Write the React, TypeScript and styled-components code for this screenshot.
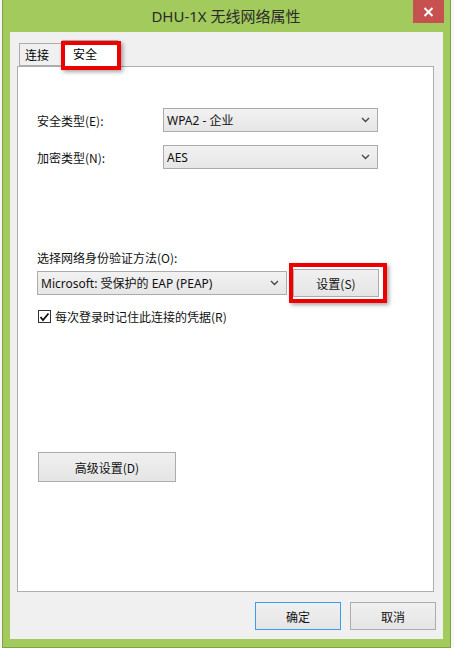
import React from "react";
import styled, { createGlobalStyle } from "styled-components";

const Global = createGlobalStyle`
  html, body { margin: 0; padding: 0; background: #f6f6f6; }
  body { font-family: "Noto Sans", "Noto Sans CJK SC", sans-serif; font-size: 12px; color: #000; }
  * { box-sizing: border-box; }
`;

const Page = styled.div`
  padding-left: 2px;
  width: 454px;
  height: 648px;
  overflow: hidden;
`;

const Window = styled.div`
  width: 449px;
  height: 648px;
  background: #a2ca5c;
  border: 1px solid #7ea446;
  border-top: none;
  display: flex;
  flex-direction: column;
`;

const TitleBar = styled.div`
  height: 32px;
  display: grid;
  grid-template-columns: 1fr auto 1fr;
  align-items: start;
`;

const Title = styled.div`
  grid-column: 2;
  font-family: "Noto Sans", "Noto Sans CJK SC", sans-serif;
  font-size: 15px;
  line-height: 32px;
  color: #2b2b2b;
  margin-right: 1px;
`;

const CloseButton = styled.div`
  grid-column: 3;
  justify-self: end;
  margin-right: 6px;
  width: 31px;
  height: 23px;
  background: #c75050;
  display: flex;
  align-items: center;
  justify-content: center;
`;

const Client = styled.div`
  margin: 0 7px 8px 7px;
  height: 607px;
  background: #f0f0f0;
  padding: 8px 9px 9px 7px;
  display: flex;
  flex-direction: column;
`;

const TabStrip = styled.div`
  height: 26px;
  display: flex;
  align-items: flex-end;
  padding-left: 2px;
  position: relative;
  z-index: 2;
`;

const Tab = styled.div<{ $active?: boolean; $w: number; $pl: number }>`
  width: ${(p) => p.$w}px;
  height: ${(p) => (p.$active ? 27 : 23)}px;
  margin-bottom: ${(p) => (p.$active ? -1 : 0)}px;
  padding-left: ${(p) => p.$pl}px;
  padding-top: ${(p) => (p.$active ? 4 : 2)}px;
  background: ${(p) => (p.$active ? "#ffffff" : "#f0f0f0")};
  border: 1px solid #adadad;
  border-bottom: ${(p) => (p.$active ? "none" : "1px solid #adadad")};
  border-left: ${(p) => (p.$active ? "none" : "1px solid #adadad")};
  font-family: "Noto Sans CJK SC", sans-serif;
  font-size: 12px;
  line-height: 17px;
  position: relative;
`;

const Annotation = styled.div<{ $l: number; $t: number; $r: number; $b: number }>`
  position: absolute;
  left: ${(p) => p.$l}px;
  top: ${(p) => p.$t}px;
  right: ${(p) => p.$r}px;
  bottom: ${(p) => p.$b}px;
  border: 4px solid #ee0000;
  box-shadow: 2px 2px 4px rgba(0, 0, 0, 0.35);
  pointer-events: none;
`;

const Panel = styled.div`
  flex: 1;
  background: #ffffff;
  border: 1px solid #adadad;
  padding: 41px 0 0 19px;
  display: flex;
  flex-direction: column;
  position: relative;
  z-index: 1;
`;

const FieldRow = styled.div<{ $mt?: number }>`
  display: flex;
  align-items: center;
  margin-top: ${(p) => p.$mt ?? 0}px;
`;

const Label = styled.div<{ $w?: number }>`
  width: ${(p) => (p.$w ? `${p.$w}px` : "auto")};
  font-family: "Noto Sans CJK SC", sans-serif;
  font-size: 12px;
  line-height: 17px;
  color: #111;
  white-space: nowrap;
`;

const Select = styled.div<{ $w: number; $h?: number }>`
  width: ${(p) => p.$w}px;
  height: ${(p) => p.$h ?? 24}px;
  border: 1px solid #acacac;
  background: linear-gradient(#f2f2f2, #e6e6e6);
  display: flex;
  align-items: center;
  justify-content: space-between;
  padding: 0 7px 0 3px;
  font-family: "Noto Sans", "Noto Sans CJK SC", sans-serif;
  font-size: 12px;
  color: #111;
  white-space: nowrap;
`;

const Button = styled.div<{ $w: number; $h?: number; $default?: boolean }>`
  width: ${(p) => p.$w}px;
  height: ${(p) => p.$h ?? 28}px;
  border: 1px solid ${(p) => (p.$default ? "#3c9cf0" : "#acacac")};
  background: linear-gradient(#f0f0f0, #e5e5e5);
  display: flex;
  align-items: center;
  justify-content: center;
  font-family: "Noto Sans CJK SC", sans-serif;
  font-size: 12px;
  color: #111;
  position: relative;
  flex: none;
`;

const AuthRow = styled.div`
  display: flex;
  align-items: center;
  gap: 6px;
  margin-top: 3px;
`;

const CheckRow = styled.div`
  display: flex;
  align-items: center;
  gap: 4px;
  margin-top: 11px;
  margin-left: 1px;
  height: 17px;
`;

const CheckBox = styled.div`
  width: 13px;
  height: 13px;
  border: 1px solid #333;
  background: #fff;
  display: flex;
  align-items: center;
  justify-content: center;
`;

const AdvancedWrap = styled.div`
  margin-top: 127px;
  margin-left: 1px;
`;

const Footer = styled.div`
  margin-top: 10px;
  margin-right: -2px;
  display: flex;
  justify-content: flex-end;
  gap: 9px;
`;

const Chevron = () => (
  <svg width="9" height="6" viewBox="0 0 9 6">
    <polyline points="1,1 4.5,4.5 8,1" fill="none" stroke="#444" strokeWidth="1.3" />
  </svg>
);

export default function App() {
  return (
    <Page>
      <Global />
      <Window>
        <TitleBar>
          <Title>DHU-1X 无线网络属性</Title>
          <CloseButton>
            <svg width="11" height="10" viewBox="0 0 11 10">
              <path d="M1.5 1 L9.5 9 M9.5 1 L1.5 9" stroke="#fff" strokeWidth="2" />
            </svg>
          </CloseButton>
        </TitleBar>
        <Client>
          <TabStrip>
            <Tab $w={43} $pl={5}>连接</Tab>
            <Tab $active $w={56} $pl={11}>
              安全
              <Annotation $l={-1} $t={0} $r={-4} $b={-3} />
            </Tab>
          </TabStrip>
          <Panel>
            <FieldRow>
              <Label $w={126}>安全类型(E):</Label>
              <Select $w={215}>
                <span>WPA2 - 企业</span>
                <Chevron />
              </Select>
            </FieldRow>
            <FieldRow $mt={13}>
              <Label $w={126}>加密类型(N):</Label>
              <Select $w={215}>
                <span>AES</span>
                <Chevron />
              </Select>
            </FieldRow>
            <FieldRow $mt={80}>
              <Label>选择网络身份验证方法(O):</Label>
            </FieldRow>
            <AuthRow>
              <Select $w={250} $h={24}>
                <span>Microsoft: 受保护的 EAP (PEAP)</span>
                <Chevron />
              </Select>
              <Button $w={86}>
                设置(S)
                <Annotation $l={-5} $t={-7} $r={-9} $b={-7} />
              </Button>
            </AuthRow>
            <CheckRow>
              <CheckBox>
                <svg width="11" height="10" viewBox="0 0 11 10">
                  <polyline points="1.5,5 4,8 9.5,1.5" fill="none" stroke="#111" strokeWidth="1.8" />
                </svg>
              </CheckBox>
              <Label>每次登录时记住此连接的凭据(R)</Label>
            </CheckRow>
            <AdvancedWrap>
              <Button $w={138} $h={30}>高级设置(D)</Button>
            </AdvancedWrap>
          </Panel>
          <Footer>
            <Button $w={86} $default>确定</Button>
            <Button $w={86}>取消</Button>
          </Footer>
        </Client>
      </Window>
    </Page>
  );
}
